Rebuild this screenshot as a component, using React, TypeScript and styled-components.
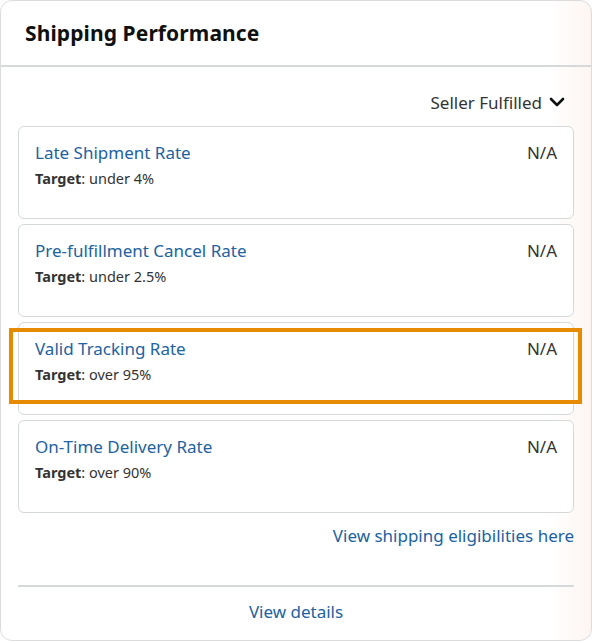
import React from 'react';
import styled, { createGlobalStyle } from 'styled-components';

const GlobalStyle = createGlobalStyle`
  html, body {
    margin: 0;
    padding: 0;
    background: #ffffff;
  }
  body {
    font-family: 'Noto Sans', 'Open Sans', Arial, sans-serif;
    color: #0f1111;
    -webkit-font-smoothing: antialiased;
  }
`;

type Metric = {
  name: string;
  target: string;
  value: string;
  highlighted?: boolean;
};

const metrics: Metric[] = [
  { name: 'Late Shipment Rate', target: 'under 4%', value: 'N/A' },
  { name: 'Pre-fulfillment Cancel Rate', target: 'under 2.5%', value: 'N/A' },
  { name: 'Valid Tracking Rate', target: 'over 95%', value: 'N/A', highlighted: true },
  { name: 'On-Time Delivery Rate', target: 'over 90%', value: 'N/A' },
];

const ChevronDown = () => (
  <svg width="18" height="18" viewBox="0 0 18 18" aria-hidden="true">
    <path d="M3 6 L9 12 L15 6" fill="none" stroke="#0f1111" strokeWidth="2.6" strokeLinecap="round" strokeLinejoin="round" />
  </svg>
);

const MetricCard: React.FC<{ metric: Metric }> = ({ metric }) => (
  <Card>
    <CardText>
      <MetricName href="#">{metric.name}</MetricName>
      <Target>
        <strong>Target</strong>: {metric.target}
      </Target>
    </CardText>
    <Value>{metric.value}</Value>
    {metric.highlighted && <Highlight />}
  </Card>
);

const App: React.FC = () => (
  <>
    <GlobalStyle />
    <Panel>
      <Header>
        <Title>Shipping Performance</Title>
      </Header>
      <Body>
        <FilterRow>
          <FilterButton>
            Seller Fulfilled
            <ChevronDown />
          </FilterButton>
        </FilterRow>
        <CardList>
          {metrics.map((m) => (
            <MetricCard key={m.name} metric={m} />
          ))}
        </CardList>
        <LinkRow>
          <Link href="#">View shipping eligibilities here</Link>
        </LinkRow>
        <Footer>
          <Link href="#">View details</Link>
        </Footer>
      </Body>
    </Panel>
  </>
);

const Panel = styled.div`
  box-sizing: border-box;
  width: 592px;
  height: 641px;
  border: 1px solid #dcdcdc;
  border-radius: 12px;
  overflow: hidden;
  background: linear-gradient(to right, #ffffff 0%, #ffffff 93%, #fdf5f2 100%);
`;

const Header = styled.div`
  height: 64px;
  display: flex;
  align-items: center;
  padding: 0 24px;
  border-bottom: 2px solid #d5d9d9;
`;

const Title = styled.h2`
  margin: 0;
  font-size: 21px;
  font-weight: 700;
  color: #0f1111;
  letter-spacing: 0.1px;
`;

const Body = styled.div`
  padding: 0 17px 0 17px;
`;

const FilterRow = styled.div`
  display: flex;
  justify-content: flex-end;
  padding: 23px 8px 0 0;
  height: 36px;
  box-sizing: content-box;
`;

const FilterButton = styled.button`
  display: flex;
  align-items: center;
  gap: 6px;
  height: 24px;
  padding: 0;
  border: none;
  background: none;
  font-family: inherit;
  font-size: 17px;
  color: #333333;
  cursor: pointer;
`;

const CardList = styled.div`
  display: flex;
  flex-direction: column;
  gap: 5px;
`;

const Card = styled.div`
  position: relative;
  box-sizing: border-box;
  height: 93px;
  display: flex;
  justify-content: space-between;
  align-items: flex-start;
  padding: 14px 16px 0 16px;
  border: 1px solid #d5d9d9;
  border-radius: 6px;
  background: #ffffff;
`;

const CardText = styled.div`
  display: flex;
  flex-direction: column;
  gap: 3px;
`;

const MetricName = styled.a`
  font-size: 17px;
  line-height: 24px;
  color: #2162a1;
  text-decoration: none;
`;

const Target = styled.div`
  font-size: 14.5px;
  line-height: 20px;
  color: #333333;

  strong {
    font-weight: 700;
  }
`;

const Value = styled.div`
  font-size: 17px;
  line-height: 24px;
  color: #333333;
`;

const Highlight = styled.div`
  position: absolute;
  left: -10px;
  right: -9px;
  top: 5px;
  bottom: 10px;
  border: 4px solid #e68a00;
  pointer-events: none;
`;

const LinkRow = styled.div`
  display: flex;
  justify-content: flex-end;
  padding: 11px 0 0;
  height: 61px;
`;

const Link = styled.a`
  font-size: 17px;
  line-height: 24px;
  color: #2162a1;
  text-decoration: none;
`;

const Footer = styled.div`
  display: flex;
  justify-content: center;
  border-top: 2px solid #d5d9d9;
  padding-top: 13px;
`;

export default App;
